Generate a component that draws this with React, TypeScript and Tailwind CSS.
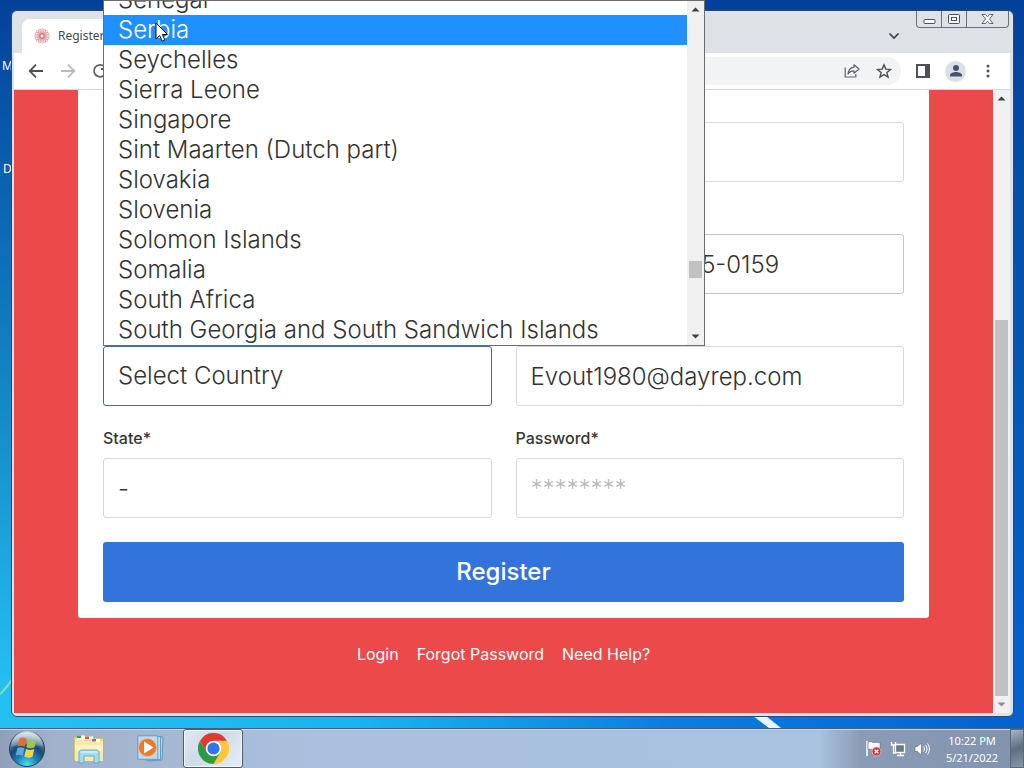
import React from "react";

const countries = [
  "Senegal",
  "Serbia",
  "Seychelles",
  "Sierra Leone",
  "Singapore",
  "Sint Maarten (Dutch part)",
  "Slovakia",
  "Slovenia",
  "Solomon Islands",
  "Somalia",
  "South Africa",
  "South Georgia and South Sandwich Islands",
];

const labelClass = "block text-base leading-6 font-medium text-[#363636] mb-2";
const inputClass =
  "block w-full h-[60px] rounded-[3px] border bg-white pr-[14px] text-2xl font-light text-[#333333] outline-none placeholder:text-[#b8b8b8]";

type FieldProps = {
  id: string;
  label: string;
  value?: string;
  placeholder?: string;
  type?: string;
  className?: string;
};

function Field({ id, label, value, placeholder, type = "text", className = "border-[#d8d8d8] pl-[14px]" }: FieldProps) {
  return (
    <div>
      <label htmlFor={id} className={labelClass}>
        {label}
      </label>
      <input id={id} type={type} defaultValue={value} placeholder={placeholder} className={`${inputClass} ${className}`} />
    </div>
  );
}

function Arrow({ up = false, color = "#404040" }: { up?: boolean; color?: string }) {
  return (
    <svg width="17" height="17" viewBox="0 0 17 17" className="shrink-0" aria-hidden="true">
      <path d={up ? "M4.5 10.5h8l-4-4z" : "M4.5 6.5h8l-4 4z"} fill={color} />
    </svg>
  );
}

function CountryField() {
  return (
    <div>
      <label htmlFor="country" className={labelClass}>
        Country*
      </label>
      <div className="relative">
        <select
          id="country"
          className="block h-[60px] w-full appearance-none rounded-[3px] border border-[#4a68a8] bg-white px-[14px] text-2xl font-light text-[#333333] outline-none"
        >
          <option>Select Country</option>
        </select>
        <div className="absolute bottom-full left-0 z-20 flex h-[346px] w-[602px] border border-[#6b6b70] bg-white">
          <ul className="flex min-w-0 flex-1 flex-col justify-end overflow-hidden" role="listbox" aria-label="Country">
            {countries.map((name) => (
              <li
                key={name}
                role="option"
                aria-selected={name === "Serbia"}
                className={
                  name === "Serbia"
                    ? "h-[30px] shrink-0 bg-[#1e90ff] px-[14px] text-2xl leading-[30px] font-light text-white"
                    : "h-[30px] shrink-0 px-[14px] text-2xl leading-[30px] font-light text-[#333333]"
                }
              >
                {name}
              </li>
            ))}
          </ul>
          <div className="flex w-[17px] flex-col bg-[#f0f0f0]">
            <Arrow up />
            <div className="flex-1 pt-[243px]">
              <div className="mx-auto h-[17px] w-[13px] bg-[#c1c1c1]" />
            </div>
            <Arrow />
          </div>
          <svg width="14" height="21" viewBox="0 0 14 21" className="absolute top-[21px] left-[51px]" aria-hidden="true">
            <path d="M1 1v16l3.7-3.5 2.4 5.7 2.7-1.1-2.4-5.6h5.1z" fill="#fff" stroke="#111" strokeWidth="1" />
          </svg>
        </div>
      </div>
    </div>
  );
}

function Favicon() {
  return (
    <svg width="16" height="16" viewBox="0 0 16 16" fill="none" stroke="#e08a8e" strokeWidth="0.6" aria-hidden="true">
      {[0, 22.5, 45, 67.5, 90, 112.5, 135, 157.5].map((a) => (
        <ellipse key={a} cx="8" cy="8" rx="7.4" ry="2.2" transform={`rotate(${a} 8 8)`} />
      ))}
      <circle cx="8" cy="8" r="2.2" stroke="#cf4a52" />
    </svg>
  );
}

function TabStrip() {
  return (
    <div className="flex h-[42px] items-start">
      <div className="mt-2 ml-2 flex h-[34px] w-[240px] items-center gap-2 rounded-t-lg bg-white px-3">
        <Favicon />
        <span className="font-['Noto_Sans'] text-xs text-[#45494d]">Register</span>
      </div>
      <div className="ml-auto flex">
        <button aria-label="Search tabs" className="mt-[15px] mr-3 flex h-5 w-5 items-center justify-center">
          <svg width="12" height="8" viewBox="0 0 12 8" fill="none" stroke="#3c4043" strokeWidth="1.7" aria-hidden="true">
            <path d="M1.5 1.5 6 6l4.500-4.500" />
          </svg>
        </button>
        <div className="mr-px flex h-[17px] divide-x divide-[#6d7177] rounded-b-[4px] border border-t-0 border-[#6d7177]">
          <button aria-label="Minimize" className="flex w-[25px] items-center justify-center">
            <svg width="13" height="12" viewBox="0 0 13 12" aria-hidden="true">
              <rect x="1" y="6.500" width="11" height="4" rx="1" fill="#fff" stroke="#4e5157" />
            </svg>
          </button>
          <button aria-label="Restore" className="flex w-[25px] items-center justify-center">
            <svg width="12" height="12" viewBox="0 0 12 12" fill="none" stroke="#4e5157" aria-hidden="true">
              <rect x="0.500" y="1.500" width="11" height="9" rx="1" fill="#f4f5f7" />
              <rect x="3.500" y="4.500" width="5" height="3" fill="#fff" />
            </svg>
          </button>
          <button aria-label="Close" className="flex w-[41px] items-center justify-center">
            <svg width="13" height="12" viewBox="0 0 13 12" aria-hidden="true">
              <path
                d="M1 1.500h3.500l2 2.300 2-2.300H12L8.500 6l3.500 4.500H8.500l-2-2.300-2 2.300H1L4.500 6z"
                fill="#fff"
                stroke="#4e5157"
                strokeWidth="0.900"
              />
            </svg>
          </button>
        </div>
      </div>
    </div>
  );
}

function Toolbar() {
  return (
    <div className="flex h-[37px] items-center border-b border-[#d5d7da] bg-white px-3 text-[#5f6368]">
      <button aria-label="Back" className="mr-3 flex h-5 w-5 items-center justify-center">
        <svg width="16" height="16" viewBox="0 0 16 16" fill="none" stroke="#4d5156" strokeWidth="1.800" aria-hidden="true">
          <path d="M15 8H2M8 1.700 1.700 8 8 14.300" />
        </svg>
      </button>
      <button aria-label="Forward" className="mr-3 flex h-5 w-5 items-center justify-center">
        <svg width="16" height="16" viewBox="0 0 16 16" fill="none" stroke="#b9bbbe" strokeWidth="1.800" aria-hidden="true">
          <path d="M1 8h13M8 1.700 14.300 8 8 14.300" />
        </svg>
      </button>
      <button aria-label="Reload" className="mr-3 flex h-5 w-5 items-center justify-center">
        <svg width="16" height="16" viewBox="0 0 16 16" fill="none" stroke="#5f6368" strokeWidth="1.800" aria-hidden="true">
          <path d="M13 4.500A6 6 0 1 0 14 8M14 1v5H9" />
        </svg>
      </button>
      <div className="flex h-7 flex-1 items-center justify-end gap-3 rounded-full bg-[#f1f3f4] pr-[7px]">
        <button aria-label="Share this page" className="flex h-5 w-5 items-center justify-center">
          <svg width="16" height="16" viewBox="0 0 16 16" fill="none" stroke="#5f6368" strokeWidth="1.200" aria-hidden="true">
            <path d="M1.200 4.500V14h10.600v-3" />
            <path d="M10 1.800l5 4.200-5 4.200V7.800C7.300 7.800 5.300 8.800 4 11c.3-3.400 2.300-6.200 6-6.800z" strokeLinejoin="round" />
          </svg>
        </button>
        <button aria-label="Bookmark this tab" className="flex h-5 w-5 items-center justify-center">
          <svg width="16" height="16" viewBox="0 0 16 16" fill="none" stroke="#4d5156" strokeWidth="1.400" aria-hidden="true">
            <path d="m8 1.800 1.800 4.300 4.700.4-3.600 3 1.100 4.600L8 11.600l-4 2.500 1.100-4.600-3.600-3 4.700-.4z" />
          </svg>
        </button>
      </div>
      <button aria-label="Side panel" className="ml-3 flex h-5 w-5 items-center justify-center">
        <svg width="14" height="14" viewBox="0 0 14 14" aria-hidden="true">
          <rect x="1" y="1" width="12" height="12" fill="#fff" stroke="#4d5156" strokeWidth="2" />
          <path d="M9 1h4v12H9z" fill="#4d5156" />
        </svg>
      </button>
      <button aria-label="Profile" className="mx-3 flex h-[21px] w-[21px] items-center justify-center rounded-full bg-[#dcdfe6]">
        <svg width="14" height="14" viewBox="0 0 14 14" fill="#46536a" aria-hidden="true">
          <circle cx="7" cy="4" r="3" />
          <path d="M1 12.500V11c0-2 4-3 6-3s6 1 6 3v1.500z" />
        </svg>
      </button>
      <button aria-label="Menu" className="flex h-5 w-5 items-center justify-center">
        <svg width="4" height="14" viewBox="0 0 4 14" fill="#4d5156" aria-hidden="true">
          <circle cx="2" cy="2" r="1.500" />
          <circle cx="2" cy="7" r="1.500" />
          <circle cx="2" cy="12" r="1.500" />
        </svg>
      </button>
    </div>
  );
}

function RegisterPage() {
  return (
    <main className="min-w-0 flex-1 bg-[#ec494b] px-16 font-['Inter',sans-serif]">
      <form className="rounded-b-[3px] bg-white px-[25px] pb-4">
        <div className="grid grid-cols-2 gap-x-6 gap-y-5">
          <Field id="address" label="Address*" />
          <Field id="company" label="Company" />
          <Field id="city" label="City*" />
          <Field id="phone" label="Phone*" value="202-555-0159" type="tel" className="border-[#c4c4c8] pl-[101px]" />
          <CountryField />
          <Field id="email" label="Email*" value="Evout1980@dayrep.com" />
          <Field id="state" label="State*" value="-" />
          <Field id="password" label="Password*" placeholder="********" type="password" />
        </div>
        <button type="button" className="mt-6 block h-[60px] w-full rounded-[3px] bg-[#3273dc] text-2xl font-medium text-white">
          Register
        </button>
      </form>
      <nav className="mt-6 flex justify-center gap-[18px] text-base leading-6 text-white">
        <a href="#login">Login</a>
        <a href="#forgot">Forgot Password</a>
        <a href="#help">Need Help?</a>
      </nav>
    </main>
  );
}

function BrowserWindow() {
  return (
    <section className="relative flex min-h-0 flex-1 flex-col rounded-[6px] border border-[#274a78] bg-[#dee1e6] pr-[3px] pb-[3px] pl-[2px]">
      <TabStrip />
      <Toolbar />
      <div className="flex min-h-0 flex-1">
        <RegisterPage />
        <div className="flex w-[17px] flex-col bg-[#f1f1f3]">
          <Arrow up />
          <div className="flex flex-1 flex-col pt-[213px]">
            <div className="mx-auto w-[13px] flex-1 bg-[#c1c1c4]" />
          </div>
          <Arrow color="#8d8d8d" />
        </div>
      </div>
    </section>
  );
}

function StartOrb() {
  return (
    <svg width="38" height="38" viewBox="0 0 38 38" aria-hidden="true">
      <defs>
        <radialGradient id="orb" cx="0.5" cy="0.95" r="0.85">
          <stop offset="0" stopColor="#4fe0f5" />
          <stop offset="0.35" stopColor="#1a86b4" />
          <stop offset="0.65" stopColor="#1b4870" />
          <stop offset="1" stopColor="#7fa0bd" />
        </radialGradient>
        <linearGradient id="shine" x1="0" y1="0" x2="0" y2="1">
          <stop offset="0" stopColor="#fff" stopOpacity="0.75" />
          <stop offset="1" stopColor="#fff" stopOpacity="0.15" />
        </linearGradient>
      </defs>
      <circle cx="19" cy="19" r="17.500" fill="url(#orb)" stroke="#263f5c" />
      <path d="M3 17a16 16 0 0 1 32 0c-7-3-25-3-32 0z" fill="url(#shine)" />
      <path d="M11.500 8.500c2.500-1.500 5-1.200 7 .2l-1.700 8c-2.500-1.300-4.800-1.400-7-.2z" fill="#ea6a30" />
      <path d="M20 9.500c2.700 1.400 5.400 1.300 8.500-.2l-1.800 8c-3 1.400-5.700 1.300-8.300 0z" fill="#9cc653" />
      <path d="M9.400 18c2.300-1.200 4.500-1 7 .2l-1.700 7.600c-2.300-1.200-4.600-1.300-7-.2z" fill="#68a5dd" />
      <path d="M18 18.900c2.700 1.300 5.400 1.300 8.300 0l-1.800 7.800c-2.900 1.400-5.600 1.200-8.200-.1z" fill="#f7d24c" />
    </svg>
  );
}

function ExplorerIcon() {
  return (
    <svg width="34" height="30" viewBox="0 0 34 30" aria-hidden="true">
      <path d="M2 3h6l1-1.500h7L17 4h14.500v22H2z" fill="#ead687" stroke="#c3a95a" strokeWidth="0.8" />
      <path d="M3 5h9l1 2h18v20H3z" fill="#f7e9a6" />
      <path d="M5 1.500h8v4H5z" fill="#fff" />
      <path d="M5 1.500h4v2.500H5z" fill="#3aa651" />
      <path d="M13 2.500h8v3h-8z" fill="#fff" />
      <path d="M13 2.500h4v2.500h-4z" fill="#d95b44" />
      <path d="M20 5h8v3h-8z" fill="#fff" />
      <path d="M20 5h4v2.500h-4z" fill="#4d86cf" />
      <path d="M3 11h28v5H3z" fill="#fcf3c4" />
      <path d="M7 29V19c0-2 1-3 3-3h14c2 0 3 1 3 3v10h-5v-7H12v7z" fill="#9edcf2" stroke="#58a8cf" strokeWidth="0.900" />
      <path d="M8.500 18h17" stroke="#e7faff" strokeWidth="1.200" />
    </svg>
  );
}

function MediaPlayerIcon() {
  return (
    <svg width="28" height="27" viewBox="0 0 28 27" aria-hidden="true">
      <path d="M8 2h18l-1 23-14 1z" fill="#a7d3ea" stroke="#508fb5" strokeWidth="0.8" />
      <path d="M5 1.500h18.500v23L8 25z" fill="#bfe0f2" stroke="#508fb5" strokeWidth="0.8" />
      <path d="M.8.8h20v23.500H.8z" fill="#b9dcf0" stroke="#5a9bc2" strokeWidth="0.900" />
      <circle cx="10.500" cy="12.500" r="9" fill="#ea7a2c" stroke="#f6b37a" strokeWidth="0.900" />
      <path d="M7 6.500v12l9.500-6z" fill="#fff" />
    </svg>
  );
}

function ChromeIcon() {
  return (
    <svg width="31" height="31" viewBox="0 0 48 48" aria-hidden="true">
      <path d="M24 12h20.800A24 24 0 0 1 24 48l10.400-18z" fill="#fcc934" />
      <path d="M3.200 12A24 24 0 0 1 44.800 12H24L13.600 30z" fill="#e0392d" />
      <path d="M3.200 12 13.600 30h20.800L24 48A24 24 0 0 1 3.200 12z" fill="#2d9a47" />
      <circle cx="24" cy="24" r="12" fill="#fff" />
      <circle cx="24" cy="24" r="9.400" fill="#2f76e8" />
    </svg>
  );
}

function Taskbar() {
  return (
    <footer className="flex h-10 shrink-0 items-stretch border-t border-[#41608a] bg-[linear-gradient(90deg,#8f9fb8_0%,#9fb1cb_5%,#a6b8d2_18%,#a9c1de_30%,#a9c2df_80%,#8a9cb5_84%,#8294ad_100%)] shadow-[inset_0_1px_0_#c9d6e8]">
      <button aria-label="Start" className="flex w-[54px] items-center justify-center">
        <StartOrb />
      </button>
      <button aria-label="Windows Explorer" className="flex w-[70px] items-center justify-center">
        <ExplorerIcon />
      </button>
      <button aria-label="Windows Media Player" className="flex w-[54px] items-center justify-center">
        <MediaPlayerIcon />
      </button>
      <button
        aria-label="Google Chrome"
        className="ml-[5px] flex w-[60px] items-center justify-center rounded-[3px] border border-[#4f5d70] bg-[linear-gradient(135deg,#dfe7f1,#cfdbe9_45%,#e8eef6)] shadow-[inset_0_0_0_1px_#f4f7fb]"
      >
        <ChromeIcon />
      </button>
      <div className="ml-auto flex items-center">
        <div className="flex items-center gap-2">
          <svg width="17" height="17" viewBox="0 0 17 17" role="img" aria-label="Action Center">
            <path d="M2 1v15" stroke="#fff" strokeWidth="1.500" />
            <path d="M3 2c3-1.500 4 1 6 .5s3 .5 6 0v7c-3 .5-4-.5-6 0s-3-1-6 0z" fill="#fff" stroke="#59636f" strokeWidth="0.600" />
            <circle cx="11.500" cy="11.500" r="4.500" fill="#d8343a" stroke="#f4c8c8" strokeWidth="0.700" />
            <path d="m9.700 9.700 3.600 3.600M13.300 9.700l-3.600 3.600" stroke="#fff" strokeWidth="1.400" />
          </svg>
          <svg width="16" height="16" viewBox="0 0 16 16" fill="none" role="img" aria-label="Network">
            <path d="M5.500 3.500h9v8h-9z" fill="#66788f" stroke="#fff" strokeWidth="1.300" />
            <path d="M7 14.500h7M10.500 12v2" stroke="#fff" strokeWidth="1.300" />
            <path d="M1.500 1v3h4V1M3.500 4v8h2" stroke="#fff" strokeWidth="1.300" />
          </svg>
          <svg width="16" height="16" viewBox="0 0 16 16" fill="none" role="img" aria-label="Volume">
            <path d="M1 5.500h2.500L7.500 2v12l-4-3.500H1z" fill="#fff" stroke="#59636f" strokeWidth="0.600" />
            <path d="M9.500 5.500c1.200 1.500 1.200 3.500 0 5M11.500 4c2 2.500 2 5.500 0 8M13.500 2.500c2.500 3.500 2.500 7.500 0 11" stroke="#fff" />
          </svg>
        </div>
        <time className="mr-2 ml-3 w-[60px] text-center font-['Noto_Sans',sans-serif] text-[11px] leading-[17px] whitespace-nowrap text-white">
          <div>10:22 PM</div>
          <div>5/21/2022</div>
        </time>
        <button
          aria-label="Show desktop"
          className="h-full w-[14px] border border-[#5b6878] bg-[linear-gradient(160deg,#a9b4c3,#5f6d80_50%,#8795a8)]"
        />
      </div>
    </footer>
  );
}

export default function App() {
  return (
    <div className="flex h-screen flex-col overflow-hidden">
      <div className="relative flex min-h-0 flex-1 flex-col bg-[linear-gradient(180deg,#04409a_0%,#034a9fcc_25%,#04509c80_55%,transparent_95%),linear-gradient(90deg,#25c0f2_0%,#18b4f0_35%,#0a7fe0_65%,#0560cc_100%)] pt-[10px] pr-[10px] pb-[11px] pl-[11px]">
        <svg className="absolute bottom-0 left-0" width="40" height="60" viewBox="0 0 40 60" fill="none" aria-hidden="true">
          <path d="M0 26Q7 20 14 8" stroke="#7fe3b0" strokeWidth="2" />
        </svg>
        <svg className="absolute right-[242px] bottom-0" width="30" height="12" viewBox="0 0 30 12" aria-hidden="true">
          <path d="M1 0h13l15 12H17z" fill="#e8f6ff" />
        </svg>
        <span className="absolute top-[58px] left-[2px] font-['Noto_Sans'] text-xs leading-4 text-white">M</span>
        <span className="absolute top-[161px] left-[3px] font-['Noto_Sans'] text-xs leading-4 text-white">D</span>
        <BrowserWindow />
      </div>
      <Taskbar />
    </div>
  );
}
